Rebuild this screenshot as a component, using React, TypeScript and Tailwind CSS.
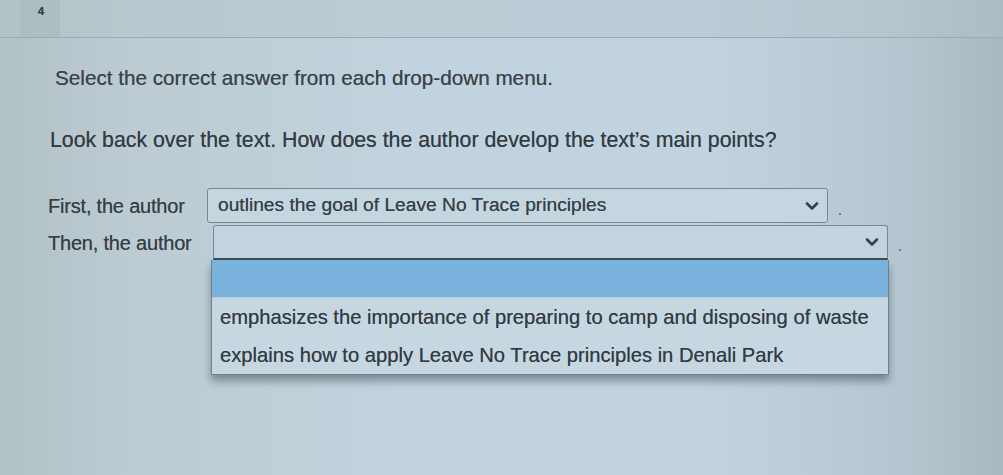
import React from "react";

function Chevron() {
  return (
    <svg width="14" height="10" viewBox="0 0 14 10" className="shrink-0">
      <path d="M2 2.5 L7 7.5 L12 2.5" fill="none" stroke="#34414b" strokeWidth="2.6" strokeLinecap="round" strokeLinejoin="round" />
    </svg>
  );
}

export default function App() {
  return (
    <div
      className="relative w-[1003px] h-[475px] overflow-hidden text-[#363e45] [text-shadow:0_0_0.6px_rgba(40,48,55,0.7)] bg-[linear-gradient(to_right,#b1c1c6_0%,#bccbd1_12%,#c1d3de_40%,#c0d3df_70%,#b6c9d3_88%,#a7babf_100%)]"
      style={{ fontFamily: '"Liberation Sans", Arial, sans-serif' }}
    >
      <div className="h-[38px] border-b border-[#9aabb2] bg-[#b2c2c7]/40 flex">
        <div className="ml-[20px] w-[40px] h-full bg-[#a9b9be]/60 pl-[18px] pt-[3px] text-[11px] font-bold text-[#2f3a42]">
          4
        </div>
      </div>

      <div className="pl-[55px] mt-[28px] text-[20.7px] leading-[24px] text-[#3a434a]">
        Select the correct answer from each drop-down menu.
      </div>

      <div className="pl-[50px] mt-[38px] text-[21.3px] leading-[24px] text-[#333b43]">
        Look back over the text. How does the author develop the text’s main points?
      </div>

      <div className="pl-[48px] mt-[36px] flex items-center">
        <span className="w-[159px] text-[20px] leading-[24px] tracking-[-0.2px] text-[#363e45]">
          First, the author
        </span>
        <div className="w-[621px] h-[35px] border border-[#77878f] rounded-[3px] bg-[#c4d6e0] flex items-center justify-between pl-[10px] pr-[8px]">
          <span className="text-[19.2px] text-[#363e45]">
            outlines the goal of Leave No Trace principles
          </span>
          <Chevron />
        </div>
        <span className="ml-[10px] mt-[10px] text-[14px] text-[#5b6870]">.</span>
      </div>

      <div className="pl-[48px] mt-[2px] flex items-center">
        <span className="w-[165px] text-[20px] leading-[24px] tracking-[-0.2px] text-[#363e45]">
          Then, the author
        </span>
        <div className="relative">
          <div className="w-[675px] h-[35px] border border-[#7a8a92] border-b-[2px] border-b-[#3f4c55] rounded-t-[3px] bg-[#c1d4df] flex items-center justify-end pr-[8px]">
            <Chevron />
          </div>
          <div className="absolute left-[-2px] top-full w-[678px] bg-[#c6d7e1] border border-t-0 border-[#6f7f87] shadow-[0_6px_8px_rgba(40,55,65,0.45)] z-10">
            <div className="h-[37px] bg-[#79b2dc]" />
            <div className="h-[39px] flex items-center pl-[8px] text-[20.2px] text-[#323b43] border-t border-[#b9cbd6]">
              emphasizes the importance of preparing to camp and disposing of waste
            </div>
            <div className="h-[38px] flex items-center pl-[8px] text-[20.2px] text-[#323b43]">
              explains how to apply Leave No Trace principles in Denali Park
            </div>
          </div>
        </div>
        <span className="ml-[10px] mt-[8px] text-[14px] text-[#5b6870]">.</span>
      </div>
    </div>
  );
}
